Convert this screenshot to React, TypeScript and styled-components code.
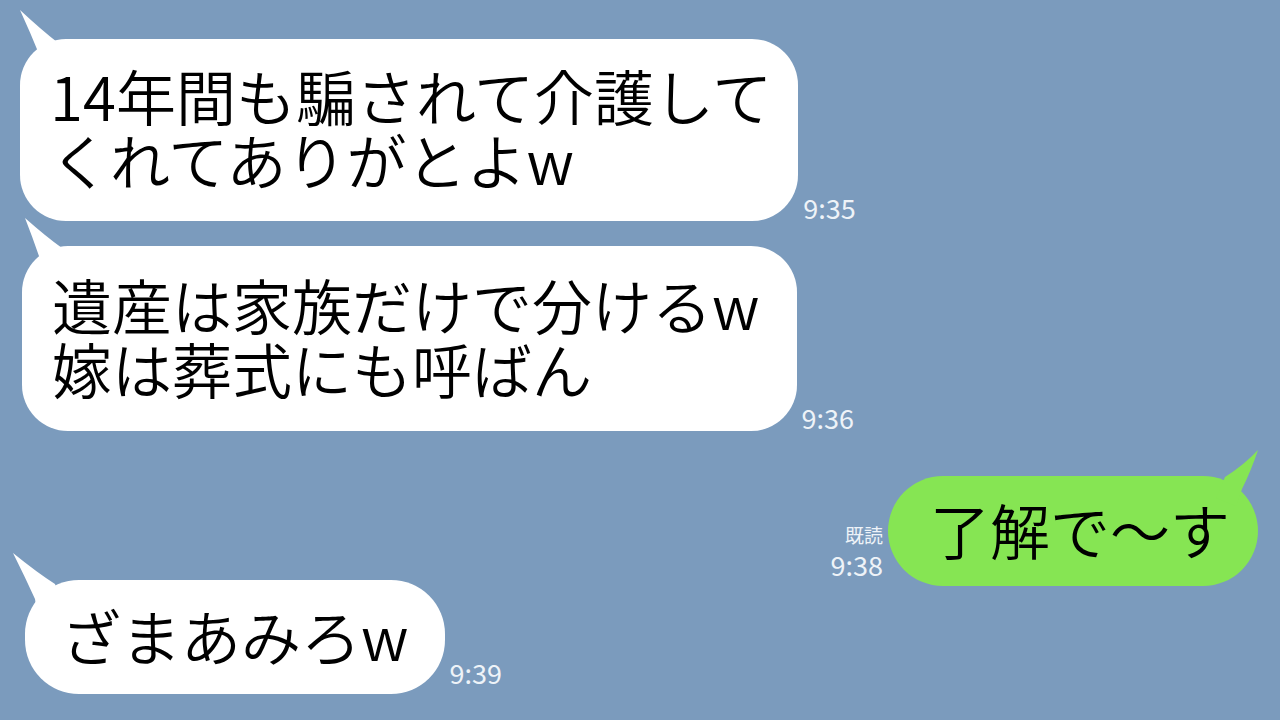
import React from "react";
import styled, { createGlobalStyle } from "styled-components";

const Global = createGlobalStyle`
  html, body {
    margin: 0;
    padding: 0;
    background: #7b9bbd;
  }
  body {
    font-family: "Noto Sans CJK JP", "Noto Sans", sans-serif;
  }
`;

const Screen = styled.div`
  width: 1280px;
  height: 720px;
  background: #7b9bbd;
  overflow: hidden;
  display: flex;
  flex-direction: column;
  font-family: "Noto Sans CJK JP", "Noto Sans", sans-serif;
`;

const Row = styled.div<{ $side: "left" | "right"; $indent: number; $top: number }>`
  display: flex;
  align-items: flex-end;
  justify-content: ${(p) => (p.$side === "left" ? "flex-start" : "flex-end")};
  gap: 5px;
  margin-top: ${(p) => p.$top}px;
  ${(p) => (p.$side === "left" ? `padding-left: ${p.$indent}px;` : `padding-right: ${p.$indent}px;`)}
`;

const Bubble = styled.div<{ $green?: boolean; $pad: string; $radius: number }>`
  position: relative;
  background: ${(p) => (p.$green ? "#86e553" : "#ffffff")};
  color: #000;
  border-radius: ${(p) => p.$radius}px;
  padding: ${(p) => p.$pad};
  font-size: 60px;
  font-weight: 350;
  line-height: 64px;
  white-space: nowrap;
  letter-spacing: 0;
`;

const Line = styled.div`
  display: block;
`;

const Time = styled.div<{ $lift?: number }>`
  font-size: 27px;
  line-height: 27px;
  font-weight: 400;
  color: #eef3f8;
  margin-bottom: ${(p) => p.$lift ?? 0}px;
`;

const Meta = styled.div`
  display: flex;
  flex-direction: column;
  align-items: flex-end;
  margin-bottom: 8px;
`;

const Read = styled.div`
  font-size: 19px;
  line-height: 20px;
  color: #eef3f8;
  margin-bottom: 6px;
`;

const TailSvg = styled.svg`
  position: absolute;
  width: 100px;
  height: 100px;
  top: -40px;
  overflow: visible;
  pointer-events: none;
`;

type P = [number, number];

function LeftTail({ tip, l, r, fill }: { tip: P; l: P; r: P; fill: string }) {
  const [tx, ty] = tip;
  const d = `M${tx},${ty} Q${(tx + r[0]) / 2 + 3},${(ty + r[1]) / 2 + 4} ${r[0]},${r[1]} L${r[0] + 8},28 L${l[0] + 2},32 L${l[0]},${l[1]} Q${(tx + l[0]) / 2 + 1},${(ty + l[1]) / 2 + 1} ${tx},${ty} Z`;
  return (
    <TailSvg viewBox="-30 -40 100 100" style={{ left: "-30px" }}>
      <path d={d} fill={fill} />
    </TailSvg>
  );
}

function RightTail({ fill }: { fill: string }) {
  const d = "M0,-26 Q-14,-11 -33,1 L-42,22 L-22,30 L-16,13 Q-7,-5 0,-26 Z";
  return (
    <TailSvg viewBox="-70 -40 100 100" style={{ right: "-30px" }}>
      <path d={d} fill={fill} />
    </TailSvg>
  );
}

export default function App() {
  return (
    <>
      <Global />
      <Screen>
        <Row $side="left" $indent={20} $top={39}>
          <Bubble $pad="24px 26px 30px 30px" $radius={46}>
            <LeftTail tip={[0, -29]} l={[19, 15]} r={[37, 3]} fill="#ffffff" />
            <Line>14年間も騙されて介護して</Line>
            <Line>くれてありがとよw</Line>
          </Bubble>
          <Time>9:35</Time>
        </Row>
        <Row $side="left" $indent={22} $top={25}>
          <Bubble $pad="26px 37px 31px 30px" $radius={46}>
            <LeftTail tip={[3, -28]} l={[19, 16]} r={[40, 2]} fill="#ffffff" />
            <Line>遺産は家族だけで分けるw</Line>
            <Line>嫁は葬式にも呼ばん</Line>
          </Bubble>
          <Time>9:36</Time>
        </Row>
        <Row $side="right" $indent={22} $top={45}>
          <Meta>
            <Read>既読</Read>
            <Time>9:38</Time>
          </Meta>
          <Bubble $green $pad="21px 28px 25px 42px" $radius={55}>
            <RightTail fill="#86e553" />
            <Line>了解で〜す</Line>
          </Bubble>
        </Row>
        <Row $side="left" $indent={25} $top={-6}>
          <Bubble $pad="23px 36px 27px 36px" $radius={54}>
            <LeftTail tip={[-12, -27]} l={[10, 19]} r={[30, 4]} fill="#ffffff" />
            <Line>ざまあみろw</Line>
          </Bubble>
          <Time $lift={8}>9:39</Time>
        </Row>
      </Screen>
    </>
  );
}
